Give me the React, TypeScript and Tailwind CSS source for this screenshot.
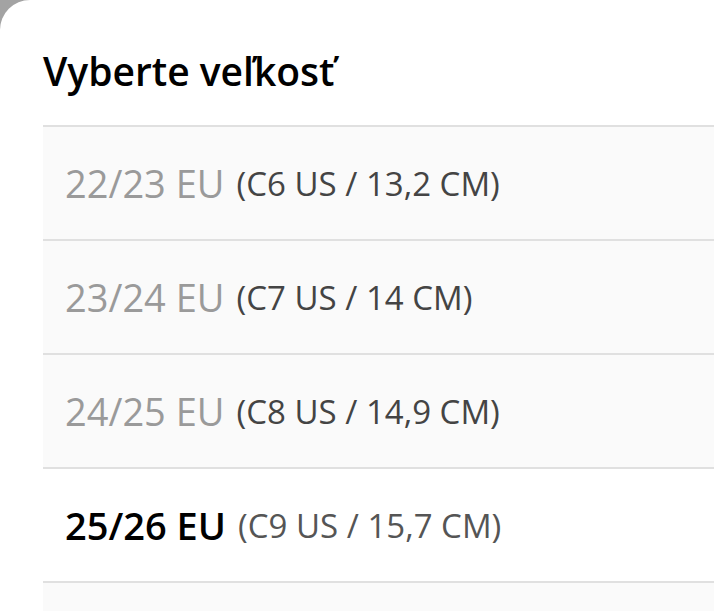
import React from "react";

const rows = [
  { eu: "22/23 EU", extra: "(C6 US / 13,2 CM)", disabled: true },
  { eu: "23/24 EU", extra: "(C7 US / 14 CM)", disabled: true },
  { eu: "24/25 EU", extra: "(C8 US / 14,9 CM)", disabled: true },
  { eu: "25/26 EU", extra: "(C9 US / 15,7 CM)", disabled: false },
];

export default function App() {
  return (
    <div className="w-[714px] h-[611px] bg-[#a3a3a3] overflow-hidden" style={{ fontFamily: '"Open Sans", sans-serif' }}>
      <div className="h-full bg-white rounded-tl-[30px] pl-[43px]">
        <h1 className="pt-[44px] h-[125px] text-[39px] font-semibold text-black leading-[54px]">Vyberte veľkosť</h1>
        <div className="border-t-2 border-[#e0e0e0]">
          {rows.map((r) => (
            <div
              key={r.eu}
              className={`h-[114px] flex items-center pl-[22px] border-b-2 border-[#e0e0e0] ${r.disabled ? "bg-[#fafafa]" : "bg-white"}`}
            >
              <span className={`text-[38px] leading-none ${r.disabled ? "text-[#9a9a9a]" : "text-black font-semibold"}`}>{r.eu}</span>
              <span className={`ml-[12px] text-[33px] leading-none ${r.disabled ? "text-[#444]" : "text-[#555] font-medium"}`}>{r.extra}</span>
            </div>
          ))}
          <div className="h-[40px] bg-[#fafafa]" />
        </div>
      </div>
    </div>
  );
}
